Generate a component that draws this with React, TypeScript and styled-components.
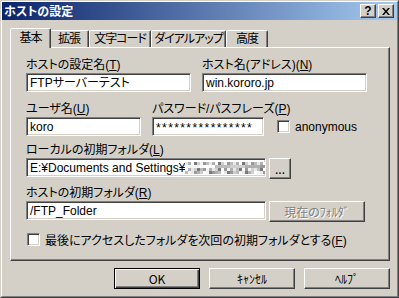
import React from "react"
import styled, { createGlobalStyle, css } from "styled-components"

const face = "#d4d0c8"

const GlobalStyle = createGlobalStyle`
  html, body {
    margin: 0;
    padding: 0;
    background: ${face};
  }
  body {
    font-family: "Liberation Sans", "Noto Sans CJK JP", sans-serif;
    font-size: 12px;
    font-feature-settings: "palt";
    color: #000;
  }
  * { box-sizing: border-box; }
`

const raised = css`
  border: 1px solid;
  border-color: #fff #404040 #404040 #fff;
  box-shadow: inset -1px -1px #808080;
  background: ${face};
`

const sunken = css`
  border: 1px solid;
  border-color: #808080 #fff #fff #808080;
  box-shadow: inset 1px 1px #404040, inset -1px -1px ${face};
  background: #fff;
`

const Window = styled.div`
  width: 399px;
  height: 298px;
  background: ${face};
  border: 1px solid;
  border-color: ${face} #404040 #404040 ${face};
  display: flex;
`

const WindowInner = styled.div`
  flex: 1;
  border: 1px solid;
  border-color: #fff #808080 #808080 #fff;
  display: flex;
  flex-direction: column;
`

const TitleBar = styled.div`
  height: 18px;
  background: linear-gradient(to right, #0a246a, #a6caf0);
  display: flex;
  align-items: center;
  padding: 0 3px 0 2px;
`

const Title = styled.span`
  flex: 1;
  color: #fff;
  font-weight: bold;
  font-size: 12px;
  line-height: 14px;
  font-family: "Noto Sans CJK JP", sans-serif;
`

const CaptionButton = styled.div`
  ${raised};
  width: 16px;
  height: 14px;
  margin-left: 2px;
  display: flex;
  align-items: center;
  justify-content: center;
  font-weight: bold;
  font-size: 12px;
  line-height: 12px;
  font-family: "Liberation Sans", sans-serif;
`

const Body = styled.div`
  padding: 8px 6px 0 8px;
  display: flex;
  flex-direction: column;
`

const TabStrip = styled.div`
  height: 19px;
  display: flex;
  align-items: flex-end;
  padding-left: 2px;
  position: relative;
  z-index: 1;
`

const Tab = styled.div<{ $w: number; $active?: boolean }>`
  width: ${p => p.$w}px;
  height: ${p => (p.$active ? 20 : 17)}px;
  margin: ${p => (p.$active ? "0 -2px -1px" : "0")};
  background: ${face};
  border: 1px solid;
  border-bottom: none;
  border-color: #fff #404040 transparent #fff;
  box-shadow: inset -1px 0 #808080;
  border-radius: 2px 2px 0 0;
  display: flex;
  justify-content: center;
  padding-top: ${p => (p.$active ? 2 : 1)}px;
  line-height: 14px;
  letter-spacing: -1px;
  white-space: nowrap;
  position: relative;
  z-index: ${p => (p.$active ? 2 : 1)};
`

const Panel = styled.div`
  ${raised};
  width: 380px;
  height: 214px;
  padding: 11px 0 0 15px;
  display: flex;
  flex-direction: column;
`

const Row = styled.div<{ $top?: number }>`
  display: flex;
  align-items: flex-end;
  margin-top: ${p => p.$top ?? 0}px;
`

const Field = styled.div<{ $w: number; $gap?: number }>`
  width: ${p => p.$w}px;
  margin-right: ${p => p.$gap ?? 0}px;
  display: flex;
  flex-direction: column;
`

const Label = styled.label`
  height: 14px;
  line-height: 13px;
  white-space: nowrap;
  u { text-underline-offset: 1px; }
`

const Input = styled.div`
  ${sunken};
  height: 19px;
  padding: 1px 3px 0;
  line-height: 15px;
  white-space: nowrap;
  overflow: hidden;
  display: flex;
  align-items: center;
`

const Stars = styled.span`
  font-family: "Liberation Sans", sans-serif;
  font-size: 12px;
  letter-spacing: 1.4px;
  padding-top: 3px;
`

const CheckBox = styled.div`
  ${sunken};
  width: 13px;
  height: 13px;
  flex: none;
`

const CheckRow = styled.div<{ $top?: number; $left?: number }>`
  display: flex;
  align-items: center;
  gap: 5px;
  margin-top: ${p => p.$top ?? 0}px;
  margin-left: ${p => p.$left ?? 0}px;
  height: 19px;
  white-space: nowrap;
  u { text-underline-offset: 1px; }
`

const SmallButton = styled.div<{ $w: number; $disabled?: boolean }>`
  ${raised};
  width: ${p => p.$w}px;
  height: 21px;
  margin-left: 3px;
  margin-bottom: -2px;
  display: flex;
  align-items: center;
  justify-content: center;
  color: ${p => (p.$disabled ? "#808080" : "#000")};
  text-shadow: ${p => (p.$disabled ? "1px 1px #fff" : "none")};
  font-family: "Noto Sans CJK JP", sans-serif;
`

const ButtonBar = styled.div`
  display: flex;
  justify-content: flex-end;
  gap: 9px;
  margin-top: 7px;
  width: 380px;
`

const DialogButton = styled.div<{ $default?: boolean }>`
  width: 86px;
  height: 21px;
  display: flex;
  align-items: center;
  justify-content: center;
  background: ${face};
  font-family: "Noto Sans CJK JP", sans-serif;
  ${p =>
    p.$default
      ? css`
          border: 1px solid #000;
          box-shadow: inset 1px 1px #fff, inset -1px -1px #404040, inset -2px -2px #808080;
        `
      : raised};
`

const shades = ["#e8e8e8", "#bdbdbd", "#9a9a9a", "#f4f4f4", "#d0d0d0", "#7a7a7a", "#ffffff", "#b0b0b0"]

const Mosaic = () => {
  const cells: React.ReactNode[] = []
  for (let r = 0; r < 4; r++) {
    for (let c = 0; c < 29; c++) {
      const i = (c * 7 + r * 3 + ((c * r) % 5)) % shades.length
      cells.push(<rect key={`${r}-${c}`} x={c * 3} y={r * 3} width={3} height={3} fill={shades[i]} />)
    }
  }
  return (
    <svg width="87" height="12" viewBox="0 0 87 12" style={{ flex: "none" }}>
      {cells}
    </svg>
  )
}

const CloseIcon = () => (
  <svg width="8" height="7" viewBox="0 0 8 7">
    <path d="M0 0h2l2 2.5L6 0h2L5 3.5L8 7H6L4 4.5L2 7H0l3-3.5z" fill="#000" />
  </svg>
)

const App = () => {
  return (
    <>
      <GlobalStyle />
      <Window>
        <WindowInner>
          <TitleBar>
            <Title>ホストの設定</Title>
            <CaptionButton>?</CaptionButton>
            <CaptionButton>
              <CloseIcon />
            </CaptionButton>
          </TitleBar>
          <Body>
            <TabStrip>
              <Tab $w={41} $active>基本</Tab>
              <Tab $w={40}>拡張</Tab>
              <Tab $w={62}>文字コード</Tab>
              <Tab $w={75}>ダイアルアップ</Tab>
              <Tab $w={42}>高度</Tab>
            </TabStrip>
            <Panel>
              <Row>
                <Field $w={165} $gap={11}>
                  <Label>ホストの設定名(<u>T</u>)</Label>
                  <Input>FTPサーバーテスト</Input>
                </Field>
                <Field $w={165}>
                  <Label>ホスト名(アドレス)(<u>N</u>)</Label>
                  <Input>win.kororo.jp</Input>
                </Field>
              </Row>
              <Row $top={11}>
                <Field $w={115} $gap={11}>
                  <Label>ユーザ名(<u>U</u>)</Label>
                  <Input>koro</Input>
                </Field>
                <Field $w={112} $gap={13}>
                  <Label>パスワード/パスフレーズ(<u>P</u>)</Label>
                  <Input>
                    <Stars>****************</Stars>
                  </Input>
                </Field>
                <CheckRow>
                  <CheckBox />
                  <span>anonymous</span>
                </CheckRow>
              </Row>
              <Row $top={8}>
                <Field $w={240}>
                  <Label>ローカルの初期フォルダ(<u>L</u>)</Label>
                  <Input>
                    <span>E:¥Documents and Settings¥</span>
                    <Mosaic />
                  </Input>
                </Field>
                <SmallButton $w={22}>...</SmallButton>
              </Row>
              <Row $top={10}>
                <Field $w={240}>
                  <Label>ホストの初期フォルダ(<u>R</u>)</Label>
                  <Input>/FTP_Folder</Input>
                </Field>
                <SmallButton $w={96} $disabled>
                  現在のﾌｫﾙﾀﾞ
                </SmallButton>
              </Row>
              <CheckRow $top={10} $left={1}>
                <CheckBox />
                <span>
                  最後にアクセスしたフォルダを次回の初期フォルダとする(<u>F</u>)
                </span>
              </CheckRow>
            </Panel>
            <ButtonBar>
              <DialogButton $default>OK</DialogButton>
              <DialogButton>ｷｬﾝｾﾙ</DialogButton>
              <DialogButton>ﾍﾙﾌﾟ</DialogButton>
            </ButtonBar>
          </Body>
        </WindowInner>
      </Window>
    </>
  )
}

export default App
